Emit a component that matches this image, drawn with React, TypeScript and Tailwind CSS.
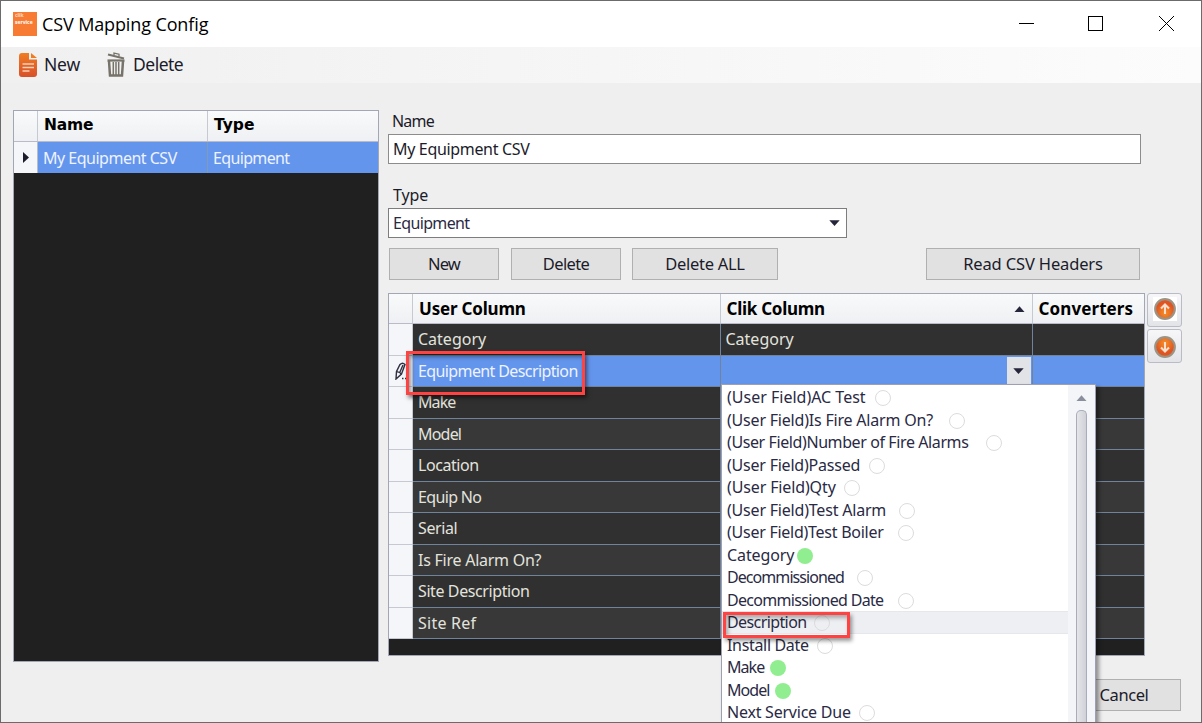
import React from "react";

const mappings = [
  { user: "Category", clik: "Category", text: "tracking-[0px]" },
  { user: "Equipment Description", clik: "", active: true, text: "tracking-[-0.61px]" },
  { user: "Make", clik: "", text: "tracking-[-0.9px]" },
  { user: "Model", clik: "", text: "tracking-[-0.8px]" },
  { user: "Location", clik: "", text: "tracking-[-0.45px]" },
  { user: "Equip No", clik: "", text: "tracking-[-0.65px]" },
  { user: "Serial", clik: "", text: "tracking-[-0.4px]" },
  { user: "Is Fire Alarm On?", clik: "", text: "tracking-[-0.25px]" },
  { user: "Site Description", clik: "", text: "tracking-[-0.4px]" },
  { user: "Site Ref", clik: "", text: "tracking-[0.25px]" },
];

// width is the space the label takes before its status dot
const options = [
  { label: "(User Field)AC Test", width: 148, text: "tracking-[0px]" },
  { label: "(User Field)Is Fire Alarm On?", width: 221.5, text: "tracking-[-0.2px]" },
  { label: "(User Field)Number of Fire Alarms", width: 259, text: "tracking-[-0.4px]" },
  { label: "(User Field)Passed", width: 142, text: "tracking-[-0.22px]" },
  { label: "(User Field)Qty", width: 116.5, text: "tracking-[-0.13px]" },
  { label: "(User Field)Test Alarm", width: 172, text: "tracking-[-0.2px]" },
  { label: "(User Field)Test Boiler", width: 170.5, text: "tracking-[-0.26px]" },
  { label: "Category", width: 70, used: true, text: "tracking-[-0.1px]" },
  { label: "Decommissioned", width: 130, text: "tracking-[-0.93px]" },
  { label: "Decommissioned Date", width: 170.5, text: "tracking-[-0.7px]" },
  { label: "Description", width: 86.5, hover: true, text: "tracking-[-0.6px]" },
  { label: "Install Date", width: 89.5, text: "tracking-[-0.33px]" },
  { label: "Make", width: 43, used: true, text: "tracking-[-0.95px]" },
  { label: "Model", width: 47.5, used: true, text: "tracking-[-0.95px]" },
  { label: "Next Service Due", width: 131.5, text: "tracking-[-0.23px]" },
];

const Triangle = ({ up, className = "text-[#25253b]" }: any) => (
  <svg width="11" height="6" viewBox="0 0 11 6" className={className}>
    <path d={up ? "M0.5 6L5.5 0.3L10.5 6Z" : "M0.3 0.3H10.7L5.5 6Z"} fill="currentColor" />
  </svg>
);

const Button = ({ children, className }: any) => (
  <button className={`flex h-[32px] shrink-0 items-center justify-center border-[1.5px] border-[#b0b0b0] bg-[#e1e1e1] text-[16.5px] text-[#1b1b2a] ${className}`}>
    {children}
  </button>
);

const TitleBar = () => (
  <div className="flex h-[46px] shrink-0 items-center justify-between bg-white">
    <div className="flex items-center">
      <div className="-mt-px ml-3 h-6 w-6 bg-[#f77b33] pl-[2px] font-['Open_Sans',sans-serif] text-[5px] font-bold leading-[7px] text-white">
        <div className="h-[7px] opacity-70">clik</div>
        <div className="h-[7px]">service</div>
      </div>
      <h1 className="ml-[5px] font-['Open_Sans',sans-serif] text-[18px] tracking-[-0.12px] text-black">CSV Mapping Config</h1>
    </div>
    <svg width="160" height="16" viewBox="0 0 160 16" className="mb-[2px] mr-[25px] text-black" fill="none" stroke="currentColor" shapeRendering="crispEdges">
      <path d="M3 8.5H18" />
      <path d="M72.5 1.5H86.5V15.5H72.5Z" />
      <path d="M143 1L158 16M158 1L143 16" shapeRendering="auto" />
    </svg>
  </div>
);

const Toolbar = () => (
  <div className="flex h-[36px] shrink-0 items-center bg-linear-to-r from-[#f0f0f0] to-[#fcfcfc] text-[17.5px] text-[#1b1b2a]">
    <svg width="20" height="26" viewBox="0 0 20 26" className="ml-[17px]">
      <defs>
        <linearGradient id="doc" x1="0" y1="0" x2="0" y2="1">
          <stop offset="0" stopColor="#f07c22" />
          <stop offset="1" stopColor="#d8502a" />
        </linearGradient>
      </defs>
      <path d="M4 1H11V7.500H19V22Q19 25 16 25H4Q1 25 1 22V4Q1 1 4 1Z" fill="url(#doc)" />
      <path d="M13 1L19 6H13Z" fill="#f07c22" />
      <path d="M4.500 12H16M4.500 15.500H16M4.500 19H11.500" stroke="#f8cfb8" strokeWidth="1.500" />
    </svg>
    <span className="ml-[6px] w-[62px] tracking-[-0.2px]">New</span>
    <svg width="20" height="26" viewBox="0 0 20 26" fill="none" stroke="#77736a">
      <path d="M2 2.500L18 6.500" strokeWidth="2" />
      <path d="M8 3V1L13 2.200V4.500" strokeWidth="1.300" />
      <path d="M1.500 8.500H18.500" strokeWidth="2.200" />
      <path d="M3 9L4 23.500H16L17 9" strokeWidth="2.500" />
      <path d="M7.300 10V23M10 10V23M12.700 10V23" strokeWidth="1.500" />
    </svg>
    <span className="ml-[7px] tracking-[-0.5px]">Delete</span>
  </div>
);

const ConfigList = () => (
  <div className="mt-[27px] flex h-[552px] w-[366px] shrink-0 flex-col border-[1.5px] border-[#a3a6b4] bg-[#202020]">
    <div className="flex h-[31px] shrink-0 border-b border-[#b9bcc8] bg-linear-to-b from-[#f9fafb] to-[#eff0f3] font-['DejaVu_Sans',sans-serif] text-[15.5px] font-bold text-black">
      <div className="w-[24px] border-r border-[#c6c8d2]" />
      <div className="flex w-[170px] items-center border-r border-[#c6c8d2] pl-[6px] tracking-[-0.2px]">Name</div>
      <div className="flex items-center pl-[6px]">Type</div>
    </div>
    <div className="flex h-[31px] shrink-0 bg-[#6495ed] text-[#eef3ff]">
      <div className="flex w-[24px] items-center justify-center border-r border-[#b9bcc8] bg-[#f4f6f9]">
        <svg width="6" height="11" viewBox="0 0 6 11"><path d="M0 0L6 5.500L0 11Z" fill="#1c1c2c" /></svg>
      </div>
      <div className="flex w-[170px] items-center border-r border-[#7e9bb8] pl-[5px] tracking-[-0.5px]">My Equipment CSV</div>
      <div className="flex items-center pl-[5px] tracking-[-0.65px]">Equipment</div>
    </div>
  </div>
);

const OptionList = () => (
  <div className="absolute left-[720px] top-[383px] flex h-[339px] w-[375px] overflow-hidden border-x-[1.5px] border-t-[1.5px] border-[#9da0b0] bg-white text-[#2a2a44] shadow-[3px_3px_4px_rgba(0,0,0,0.4)]">
    <div className="w-[346px] pt-px">
      {options.map((option) => (
        <div key={option.label} className={`flex h-[22.5px] items-center pl-[5px] ${option.hover ? "border-y border-[#e6e7ea] bg-[#eeeff2]" : ""}`}>
          <span className={`shrink-0 whitespace-nowrap ${option.text}`} style={{ width: option.width }}>{option.label}</span>
          <span className={`mt-[2px] h-[16px] w-[16px] shrink-0 rounded-full ${option.used ? "bg-[#90ee90]" : "border-[1.5px] border-[#dcdcdc]"}`} />
        </div>
      ))}
    </div>
    <div className="flex flex-1 flex-col items-center bg-[#f4f5f8] pt-[10px]">
      <Triangle up className="text-[#8b8e9c]" />
      <div className="mt-[9px] w-[11px] flex-1 rounded-t-[5px] border-x-[1.5px] border-t-[1.5px] border-[#a9acb9] bg-linear-to-r from-[#e5e6ea] to-[#cfd1d7]" />
    </div>
  </div>
);

const MappingGrid = () => (
  <div className="h-[363px] w-[757px] shrink-0 border-[1.5px] border-[#a3a6b4] bg-[#202020]">
    <div className="flex h-[30px] border-b border-[#b9bcc8] bg-linear-to-b from-[#f9fafb] to-[#eff0f3] pb-px text-[17px] font-bold text-black">
      <div className="-mb-px w-[24px] border-r border-[#c6c8d2]" />
      <div className="-mb-px flex w-[307.500px] items-center border-r border-[#c6c8d2] pl-[6px] tracking-[-0.2px]">User Column</div>
      <div className="-mb-px flex w-[312px] items-center justify-between border-r border-[#c6c8d2] pl-[6px] pr-[7px] tracking-[-0.27px]">
        Clik Column
        <Triangle up />
      </div>
      <div className="flex items-center pl-[6px] tracking-[0.1px]">Converters</div>
    </div>
    {mappings.map((row, index) => (
      <div key={row.user} className={`flex h-[31.5px] ${row.active ? "bg-[#6495ed] text-[#eef3ff]" : index % 2 ? "bg-[#383838] text-[#e3e3de]" : "bg-[#303030] text-[#e3e3de]"}`}>
        <div className="flex w-[24px] items-center justify-end border-b border-r border-[#c6c8d2] bg-[#f4f6f9] pr-[2px]">
          {row.active && (
            <svg width="15" height="18" viewBox="0 0 15 18" fill="none" stroke="#303040" strokeWidth="1.400">
              <path d="M1 17L1.500 9.500L5 2.500Q7.500 0 10 2.500L6.500 12L1 17ZM8 3L4.500 11M1.500 10Q5 9.500 6 12" />
              <path d="M7 16.500H13" strokeDasharray="1.500 1.500" />
            </svg>
          )}
        </div>
        <div className={`flex w-[307.500px] items-center border-b border-r border-[#70839c] pl-[5px] ${row.text}`}>{row.user}</div>
        <div className={`flex w-[312px] items-center border-b border-r border-[#70839c] pl-[5px] ${row.text} tracking-[0.25px]`}>
          {row.clik}
          {row.active && (
            <span className="ml-auto mr-px flex h-[27px] w-[24px] items-center justify-center bg-[#e2e3e7]"><Triangle /></span>
          )}
        </div>
        <div className="flex-1 border-b border-[#70839c]" />
      </div>
    ))}
  </div>
);

const MoveButton = ({ down }: any) => (
  <button className="flex h-[34px] w-[35px] items-center justify-center rounded-[3px] border-[1.5px] border-[#b9bbc7] bg-linear-to-b from-[#f7f7f9] to-[#e3e4e8]">
    <svg width="24" height="24" viewBox="0 0 24 24" className={down ? "mt-px" : "-mt-[2px]"}>
      {!down && <rect width="24" height="24" fill="white" />}
      <defs>
        <radialGradient id={down ? "down" : "up"} cy={down ? "0.3" : "0.7"}>
          <stop offset="0" stopColor="#f79028" />
          <stop offset="1" stopColor="#df5420" />
        </radialGradient>
      </defs>
      <circle cx="12" cy="12" r="9.800" fill={down ? "url(#down)" : "url(#up)"} stroke="#9c9384" strokeWidth="2.200" />
      <path d={down ? "M12 7V16M8 12.500L12 16.500L16 12.500" : "M12 17V8M8 11.500L12 7.500L16 11.500"} fill="none" stroke="#fbe0d0" strokeWidth="2" />
    </svg>
  </button>
);

const MappingForm = () => (
  <div className="ml-[9px] mt-[27px] flex w-[795px] flex-col text-[#1b1b2a]">
    <label className="flex h-[24px] items-center pb-[2px] pl-[4px] tracking-[-0.8px]">Name</label>
    <div className="flex h-[30px] w-[753px] items-center border-[1.5px] border-[#8c8c8c] bg-white pl-[4px] tracking-[-0.33px]">My Equipment CSV</div>
    <label className="mt-[19px] flex h-[24px] items-center pl-[5px] tracking-[-0.1px]">Type</label>
    <div className="mt-px flex h-[30px] w-[459px] items-center justify-between border-[1.5px] border-[#7d7d7d] bg-white pl-[4px] pr-[6px] tracking-[-0.65px] text-[#2a2a44]">
      Equipment
      <Triangle />
    </div>
    <div className="mt-[10px] flex pl-px">
      <Button className="w-[110px] tracking-[-0.8px]">New</Button>
      <Button className="ml-[12px] w-[110px] tracking-[-0.65px]">Delete</Button>
      <Button className="ml-[11px] w-[146px] tracking-[-0.3px]">Delete ALL</Button>
      <Button className="ml-[148px] w-[214px] tracking-[-0.15px]">Read CSV Headers</Button>
    </div>
    <div className="mt-[13px] flex gap-[2px]">
      <MappingGrid />
      <div className="flex flex-col gap-[2px]">
        <MoveButton />
        <MoveButton down />
      </div>
    </div>
    <Button className="mr-[2px] mt-[23px] w-[114px] self-end tracking-[-0.4px]">Cancel</Button>
  </div>
);

const App = () => {
  return (
    <div className="relative flex h-[723px] w-[1202px] flex-col overflow-hidden border border-[#6b6b6b] bg-[#efefef] font-['Noto_Sans',sans-serif] text-[16px] leading-none">
      <TitleBar />
      <Toolbar />
      <div className="flex flex-1 pl-3">
        <ConfigList />
        <MappingForm />
      </div>
      <OptionList />
      <div className="absolute left-[405px] top-[350px] h-[44px] w-[179px] border-[3px] border-[#ff4343] shadow-[2px_3px_4px_rgba(0,0,0,0.5),inset_2px_3px_4px_rgba(0,0,0,0.4)]" />
      <div className="absolute left-[722px] top-[611px] h-[26px] w-[127px] border-[3px] border-[#ff4343] shadow-[2px_3px_4px_rgba(0,0,0,0.4),inset_2px_3px_4px_rgba(0,0,0,0.3)]" />
    </div>
  );
};

export default App;
